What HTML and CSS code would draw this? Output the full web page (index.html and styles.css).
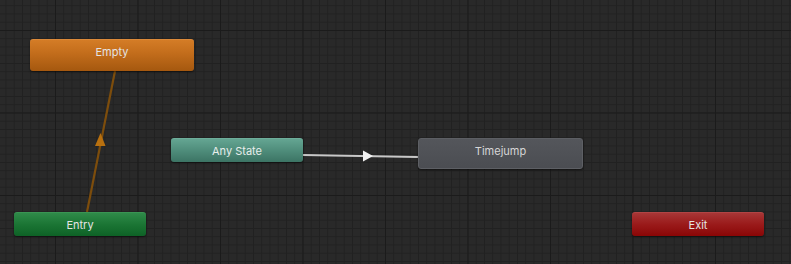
FILE: index.html
```html
<!DOCTYPE html>
<html>
<head>
<meta charset="utf-8">
<link rel="stylesheet" href="styles.css">
</head>
<body>
<div class="graph">
  <svg class="links" width="791" height="264" viewBox="0 0 791 264">
    <line x1="87" y1="212" x2="115" y2="71" class="link-entry"/>
    <polygon points="100.5,133 95,146 105.5,146" class="arrow-entry"/>
    <line x1="303" y1="155" x2="418" y2="157" class="link-any"/>
    <polygon points="363,150.5 373,156 363,161.5" class="arrow-any"/>
  </svg>
  <div class="node node-empty" style="left:30px;top:39px;width:164px;height:32px">Empty</div>
  <div class="node node-any" style="left:171px;top:138px;width:132px;height:24px">Any State</div>
  <div class="node node-state" style="left:418px;top:138px;width:165px;height:31px">Timejump</div>
  <div class="node node-entry" style="left:14px;top:212px;width:132px;height:24px">Entry</div>
  <div class="node node-exit" style="left:632px;top:212px;width:132px;height:24px">Exit</div>
</div>
</body>
</html>
```
FILE: styles.css
```css
html, body {
  margin: 0;
  padding: 0;
  background: #282828;
}
.graph {
  position: relative;
  width: 791px;
  height: 264px;
  overflow: hidden;
  background-color: #292929;
  background-image:
    linear-gradient(to right, #1b1b1b 1px, transparent 1px),
    linear-gradient(to bottom, #1b1b1b 1px, transparent 1px),
    linear-gradient(to right, #212121 1px, transparent 1px),
    linear-gradient(to bottom, #212121 1px, transparent 1px);
  background-size: 82.5px 82.5px, 82.5px 82.5px, 8.25px 8.25px, 8.25px 8.25px;
  background-position: 55px 30px, 55px 30px, 55px 30px, 55px 30px;
}
.links {
  position: absolute;
  left: 0;
  top: 0;
}
.link-entry {
  stroke: #7d4d0c;
  stroke-width: 2.2;
}
.arrow-entry {
  fill: #b8700f;
}
.link-any {
  stroke: #c8c8c8;
  stroke-width: 2.2;
}
.arrow-any {
  fill: #f2f2f2;
}
.node {
  position: absolute;
  box-sizing: border-box;
  border-radius: 3px;
  font-family: Inter, "Noto Sans", sans-serif;
  font-size: 11px;
  text-align: center;
  color: #e4e4e4;
  box-shadow: 0 1px 2px rgba(0,0,0,0.55);
}
.node-empty {
  background: linear-gradient(to bottom, #d47c26 0%, #c46e1c 40%, #a5580f 100%);
  border-top: 1px solid #dc8a3a;
  line-height: 25px;
}
.node-any {
  background: linear-gradient(to bottom, #64a592 0%, #4f8d7b 50%, #3c7464 100%);
  border-top: 1px solid #6eae9b;
  line-height: 24px;
  color: #e8eeec;
}
.node-state {
  background: linear-gradient(to bottom, #54565b 0%, #4b4d52 100%);
  border: 1px solid #5d5f64;
  line-height: 24px;
  color: #d6d6d6;
}
.node-entry {
  background: linear-gradient(to bottom, #2f8a49 0%, #1b7534 50%, #0e6226 100%);
  border-top: 1px solid #3a9453;
  line-height: 24px;
}
.node-exit {
  background: linear-gradient(to bottom, #a83636 0%, #9a1a1a 50%, #8a0606 100%);
  border-top: 1px solid #b24444;
  line-height: 24px;
}
```
